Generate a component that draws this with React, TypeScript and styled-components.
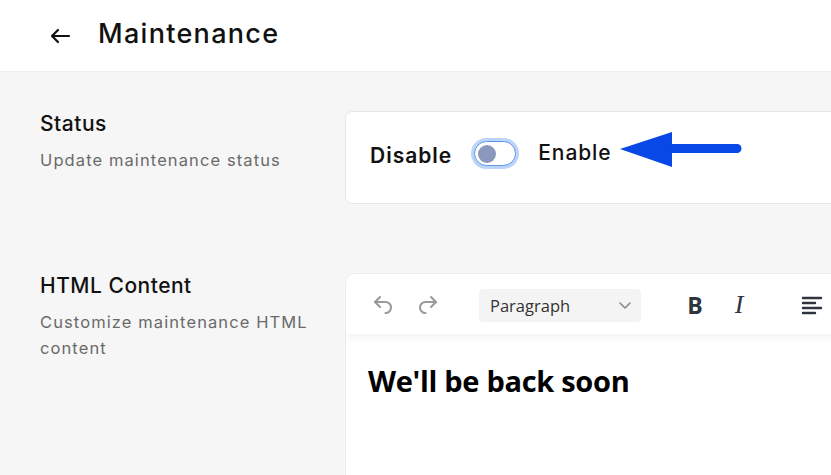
import React from "react";
import styled, { createGlobalStyle } from "styled-components";

const Global = createGlobalStyle`
  html, body { margin: 0; padding: 0; }
  body {
    background: #f6f6f6;
    font-family: "Inter", "Noto Sans", sans-serif;
    color: #111;
    overflow: hidden;
  }
`;

const Page = styled.div`
  min-width: 1100px;
  min-height: 475px;
  background: #f6f6f6;
`;

const Header = styled.header`
  height: 72px;
  background: #fff;
  border-bottom: 1px solid #ececec;
  display: flex;
  align-items: center;
  padding-left: 48px;
  gap: 26px;
  box-sizing: border-box;
`;

const BackButton = styled.button`
  border: none;
  background: none;
  padding: 0;
  width: 24px;
  height: 24px;
  display: flex;
  align-items: center;
  justify-content: center;
  color: #111;
  cursor: pointer;
`;

const Title = styled.h1`
  margin: 0;
  font-size: 27px;
  font-weight: 500;
  letter-spacing: 1.3px;
  color: #111;
  position: relative;
  top: -2px;
`;

const Main = styled.main`
  padding: 39px 0 0 40px;
  display: flex;
  flex-direction: column;
  gap: 69px;
`;

const Section = styled.section`
  display: grid;
  grid-template-columns: 280px 1fr;
  column-gap: 25px;
  align-items: start;
`;

const Info = styled.div<{ $top: number }>`
  padding-top: ${(p) => p.$top}px;
  display: flex;
  flex-direction: column;
  gap: 10px;
`;

const SectionTitle = styled.h2`
  margin: 0;
  font-size: 21px;
  line-height: 26px;
  font-weight: 500;
  letter-spacing: 0.5px;
  color: #111;
`;

const SectionDesc = styled.p`
  margin: 0;
  font-size: 16.5px;
  line-height: 26px;
  letter-spacing: 1.1px;
  color: #6a6a6a;
  font-weight: 400;
`;

const Card = styled.div`
  background: #fff;
  border: 1px solid #e7e7e7;
  border-radius: 7px;
  box-sizing: border-box;
`;

const StatusCard = styled(Card)`
  height: 93px;
  display: flex;
  align-items: center;
  padding: 0 0 8px 24px;
  gap: 20px;
`;

const ToggleLabel = styled.span<{ $bold?: boolean }>`
  font-size: 21px;
  font-weight: ${(p) => (p.$bold ? 600 : 500)};
  letter-spacing: ${(p) => (p.$bold ? 1 : 0.9)}px;
  color: #111;
  position: relative;
  top: ${(p) => (p.$bold ? 2 : -1)}px;
`;

const Toggle = styled.span`
  width: 42px;
  height: 25px;
  border-radius: 13px;
  border: 1px solid #5b96ee;
  box-shadow: 0 0 0 3px #bcd4f8;
  background: #fff;
  display: flex;
  align-items: center;
  padding-left: 3px;
  box-sizing: border-box;
  margin: 0 2px;
`;

const Knob = styled.span`
  width: 18px;
  height: 18px;
  border-radius: 50%;
  background: #8b97bd;
`;

const ArrowWrap = styled.span`
  display: flex;
  margin-left: -14px;
  margin-top: -8px;
`;

const EditorCard = styled(Card)`
  border-radius: 10px;
  height: 230px;
  overflow: hidden;
  border-color: #ececec;
`;

const Toolbar = styled.div`
  height: 60px;
  display: flex;
  align-items: center;
  padding: 2px 0 0 24px;
  box-sizing: border-box;
  background: #fff;
  box-shadow: 0 3px 8px rgba(0, 0, 0, 0.06);
  position: relative;
  font-family: "Open Sans", "Noto Sans", sans-serif;
`;

const ToolButton = styled.span<{ $gap?: number }>`
  width: 26px;
  height: 26px;
  display: flex;
  align-items: center;
  justify-content: center;
  margin-right: ${(p) => p.$gap ?? 0}px;
  color: #999;
`;

const Select = styled.div`
  width: 162px;
  height: 33px;
  background: #f4f4f4;
  border-radius: 4px;
  display: flex;
  align-items: center;
  justify-content: space-between;
  padding: 0 8px 0 11px;
  box-sizing: border-box;
  font-size: 16.5px;
  color: #333;
  margin-right: 42px;
`;

const FormatB = styled.span`
  font-family: "Open Sans", sans-serif;
  font-weight: 700;
  font-size: 23px;
  color: #2f3441;
  width: 24px;
  text-align: center;
  margin-right: 20px;
`;

const FormatI = styled.span`
  font-family: "Liberation Serif", serif;
  font-style: italic;
  font-size: 26px;
  color: #2f3441;
  width: 24px;
  text-align: center;
  margin-right: 50px;
`;

const Content = styled.div`
  padding: 27px 22px;
  font-family: "Open Sans", "Noto Sans", sans-serif;
`;

const Heading = styled.h2`
  margin: 0;
  font-size: 29px;
  font-weight: 700;
  color: #000;
  letter-spacing: -0.3px;
`;

const BackIcon = () => (
  <svg width="22" height="16" viewBox="0 0 22 16" fill="none" stroke="#111" strokeWidth="2.2" strokeLinecap="round" strokeLinejoin="round">
    <path d="M20 8H3M9 2L3 8l6 6" />
  </svg>
);

const BlueArrow = () => (
  <svg width="124" height="40" viewBox="0 0 124 40">
    <path d="M2 19 L54 2 L54 37 Z" fill="#0748e6" />
    <path d="M50 18.5 H119" stroke="#0748e6" strokeWidth="9" strokeLinecap="round" />
  </svg>
);

const Undo = () => (
  <svg width="24" height="24" viewBox="0 0 24 24" fill="none" stroke="#9a9a9a" strokeWidth="2.1" strokeLinecap="round" strokeLinejoin="round">
    <path d="M9 14L4 9l5-5" />
    <path d="M4 9h10.5a5.5 5.5 0 0 1 0 11" />
  </svg>
);

const Redo = () => (
  <svg width="24" height="24" viewBox="0 0 24 24" fill="none" stroke="#9a9a9a" strokeWidth="2.1" strokeLinecap="round" strokeLinejoin="round">
    <path d="M15 14l5-5-5-5" />
    <path d="M20 9H9.5a5.5 5.5 0 0 0 0 11" />
  </svg>
);

const Chevron = () => (
  <svg width="16" height="16" viewBox="0 0 16 16" fill="none" stroke="#8a8a8a" strokeWidth="1.6" strokeLinecap="round" strokeLinejoin="round">
    <path d="M3 6l5 5 5-5" />
  </svg>
);

const AlignLeft = () => (
  <svg width="22" height="20" viewBox="0 0 22 20" fill="none" stroke="#2f3441" strokeWidth="2.4" strokeLinecap="round">
    <path d="M2 3h18M2 8h12M2 13h18M2 18h12" />
  </svg>
);

export default function App() {
  return (
    <Page>
      <Global />
      <Header>
        <BackButton aria-label="Back">
          <BackIcon />
        </BackButton>
        <Title>Maintenance</Title>
      </Header>
      <Main>
        <Section>
          <Info $top={0}>
            <SectionTitle>Status</SectionTitle>
            <SectionDesc>Update maintenance status</SectionDesc>
          </Info>
          <StatusCard>
            <ToggleLabel $bold>Disable</ToggleLabel>
            <Toggle>
              <Knob />
            </Toggle>
            <ToggleLabel>Enable</ToggleLabel>
            <ArrowWrap>
              <BlueArrow />
            </ArrowWrap>
          </StatusCard>
        </Section>
        <Section>
          <Info $top={-3}>
            <SectionTitle>HTML Content</SectionTitle>
            <SectionDesc>Customize maintenance HTML content</SectionDesc>
          </Info>
          <EditorCard>
            <Toolbar>
              <ToolButton $gap={19}>
                <Undo />
              </ToolButton>
              <ToolButton $gap={38}>
                <Redo />
              </ToolButton>
              <Select>
                <span>Paragraph</span>
                <Chevron />
              </Select>
              <FormatB>B</FormatB>
              <FormatI>I</FormatI>
              <AlignLeft />
            </Toolbar>
            <Content>
              <Heading>We'll be back soon</Heading>
            </Content>
          </EditorCard>
        </Section>
      </Main>
    </Page>
  );
}
